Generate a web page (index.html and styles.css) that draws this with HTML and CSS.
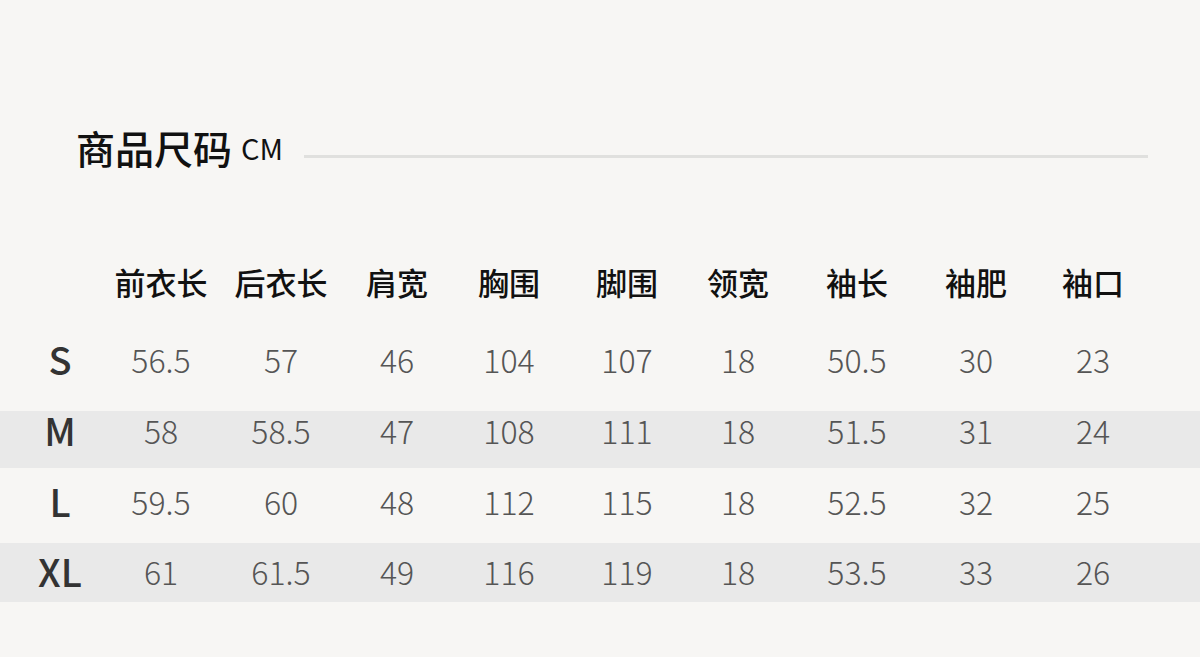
FILE: index.html
```html
<!DOCTYPE html>
<html lang="zh">
<head>
<meta charset="utf-8">
<link rel="stylesheet" href="styles.css">
</head>
<body>
<div class="page">
  <div class="title-row">
    <h1 class="title">商品尺码</h1>
    <span class="unit">CM</span>
    <div class="rule"></div>
  </div>
  <div class="table">
    <div class="row head">
      <div></div><div>前衣长</div><div>后衣长</div><div>肩宽</div><div>胸围</div><div>脚围</div><div>领宽</div><div>袖长</div><div>袖肥</div><div>袖口</div>
    </div>
    <div class="row r-s">
      <div class="size">S</div><div>56.5</div><div>57</div><div>46</div><div>104</div><div>107</div><div>18</div><div>50.5</div><div>30</div><div>23</div>
    </div>
    <div class="row r-m stripe">
      <div class="size">M</div><div>58</div><div>58.5</div><div>47</div><div>108</div><div>111</div><div>18</div><div>51.5</div><div>31</div><div>24</div>
    </div>
    <div class="row r-l">
      <div class="size">L</div><div>59.5</div><div>60</div><div>48</div><div>112</div><div>115</div><div>18</div><div>52.5</div><div>32</div><div>25</div>
    </div>
    <div class="row r-xl stripe">
      <div class="size">XL</div><div>61</div><div>61.5</div><div>49</div><div>116</div><div>119</div><div>18</div><div>53.5</div><div>33</div><div>26</div>
    </div>
  </div>
</div>
</body>
</html>
```
FILE: styles.css
```css
html, body {
  margin: 0;
  padding: 0;
  background: #f7f6f4;
}
body {
  font-family: "Noto Sans CJK SC", "Noto Sans", sans-serif;
  width: 1200px;
  height: 657px;
  overflow: hidden;
}
.page {
  padding-top: 122px;
}
.title-row {
  display: flex;
  align-items: center;
  padding-left: 76px;
  height: 50px;
}
.title {
  margin: 0;
  font-size: 39px;
  font-weight: 500;
  color: #111;
  line-height: 50px;
}
.unit {
  font-size: 29px;
  font-weight: 400;
  color: #111;
  margin-left: 9px;
  line-height: 50px;
}
.rule {
  width: 844px;
  height: 3px;
  background: #e0e0de;
  margin-left: 21px;
  margin-top: 18px;
}
.table {
  margin-top: 92px;
}
.row {
  display: grid;
  grid-template-columns: 100px 102px 138px 94px 130px 106px 116px 122px 116px 118px;
  padding-left: 10px;
  align-items: center;
  text-align: center;
  line-height: 36px;
  font-size: 32px;
  font-weight: 300;
  color: #555;
}
.row.head {
  font-size: 31px;
  font-weight: 500;
  color: #111;
  padding-bottom: 41px;
}
.stripe {
  background: #e9e9e9;
}
.size {
  font-size: 38px;
  font-weight: 500;
  color: #333;
}
.r-s { padding-bottom: 34px; }
.r-m { padding-top: 1px; padding-bottom: 20px; }
.r-l { padding-top: 15px; padding-bottom: 24px; }
.r-xl { padding-top: 10px; padding-bottom: 13px; }
```
